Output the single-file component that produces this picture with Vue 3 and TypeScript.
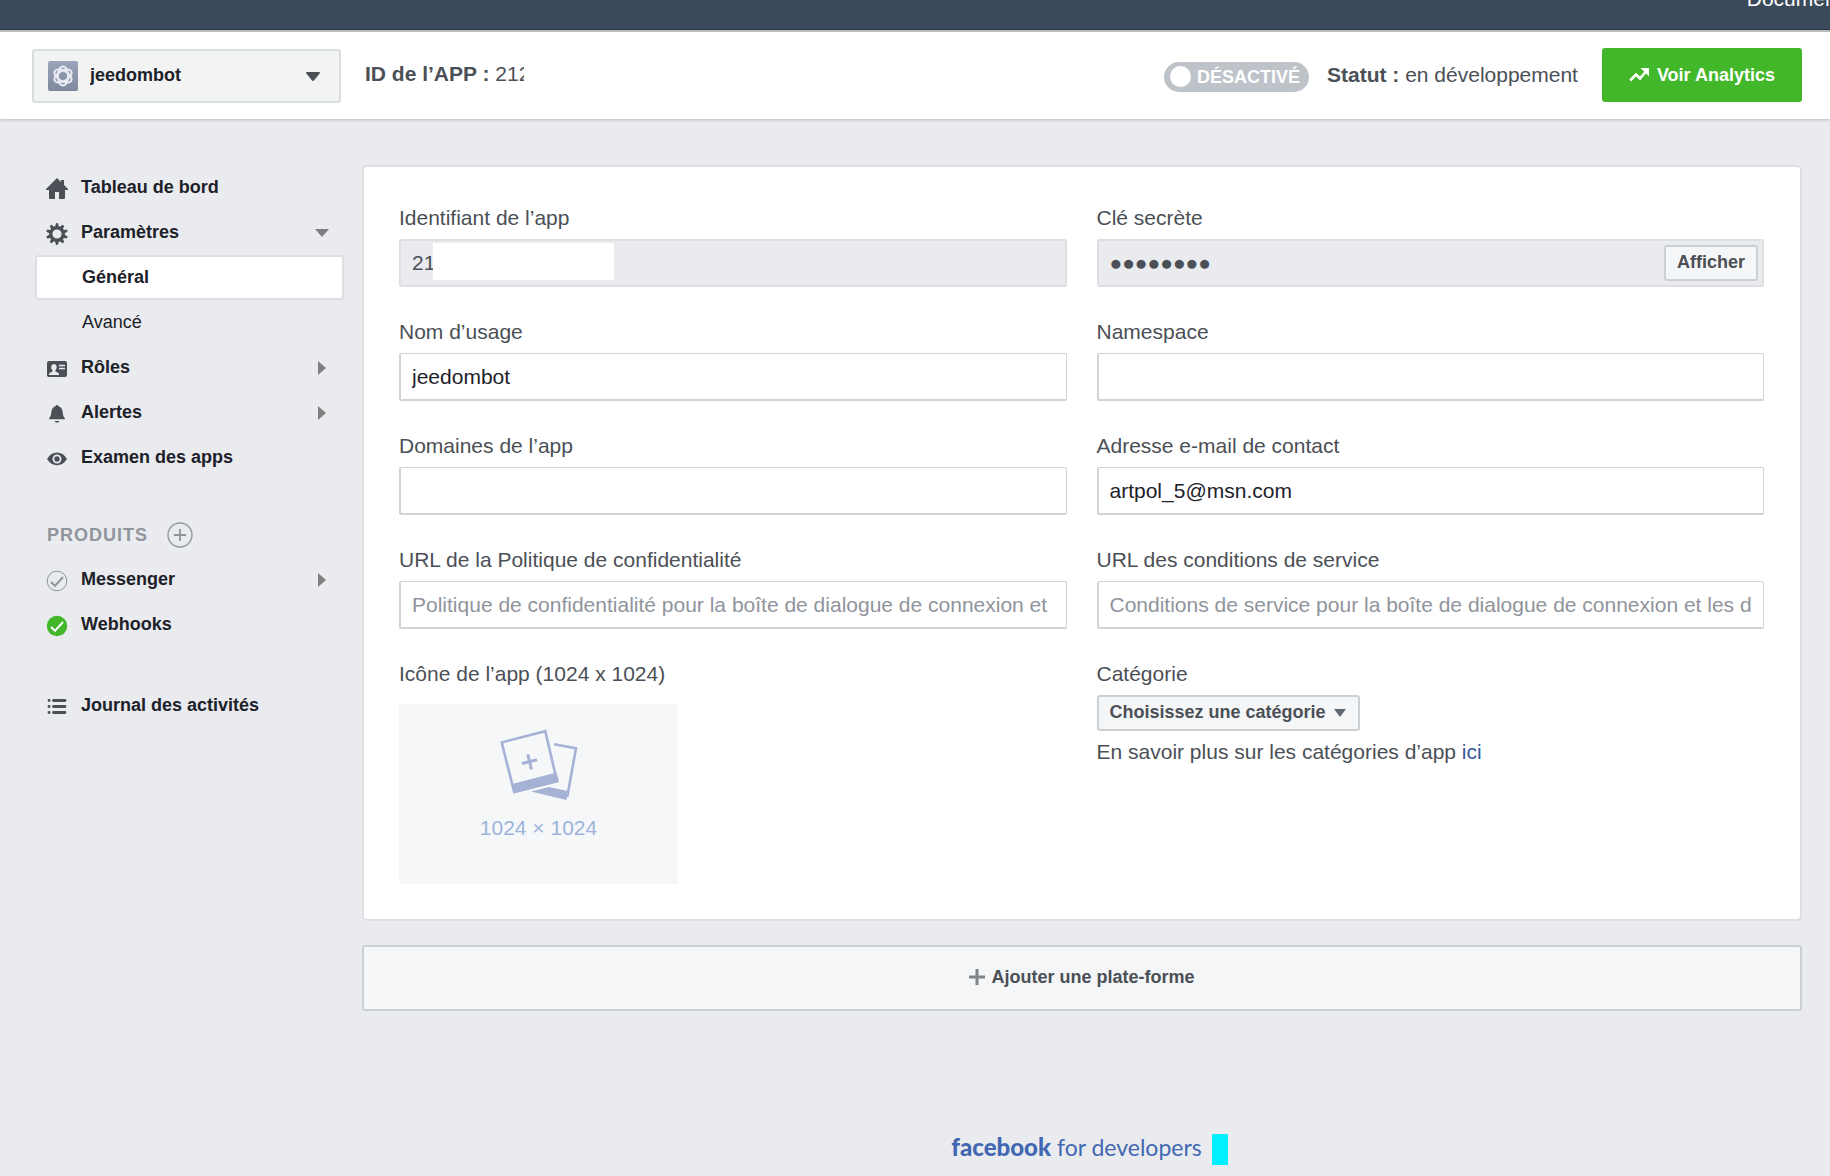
<script setup lang="ts">
import { ref } from 'vue'

type NavItem = {
  label: string
  icon: 'home' | 'gear' | 'card' | 'bell' | 'eye' | 'check' | 'checked' | 'list' | ''
  arrow?: 'down' | 'right'
  kind?: 'active' | 'sub'
}

type Field = {
  id: string
  label: string
  value: string
  placeholder?: string
  locked?: boolean
  masked?: boolean
  action?: string
}

const mainNav: NavItem[] = [
  { label: 'Tableau de bord', icon: 'home' },
  { label: 'Paramètres', icon: 'gear', arrow: 'down' },
  { label: 'Général', icon: '', kind: 'active' },
  { label: 'Avancé', icon: '', kind: 'sub' },
  { label: 'Rôles', icon: 'card', arrow: 'right' },
  { label: 'Alertes', icon: 'bell', arrow: 'right' },
  { label: 'Examen des apps', icon: 'eye' },
]
const productNav: NavItem[] = [
  { label: 'Messenger', icon: 'check', arrow: 'right' },
  { label: 'Webhooks', icon: 'checked' },
]
const logNav: NavItem[] = [{ label: 'Journal des activités', icon: 'list' }]
const navGroups = [
  { key: 'main', title: '', items: mainNav },
  { key: 'products', title: 'PRODUITS', items: productNav },
  { key: 'log', title: '', items: logNav },
]

const fields = ref<Field[]>([
  { id: 'app-id', label: 'Identifiant de l’app', value: '21', locked: true, masked: true },
  { id: 'secret', label: 'Clé secrète', value: '●●●●●●●●', locked: true, action: 'Afficher' },
  { id: 'name', label: 'Nom d’usage', value: 'jeedombot' },
  { id: 'namespace', label: 'Namespace', value: '' },
  { id: 'domains', label: 'Domaines de l’app', value: '' },
  { id: 'email', label: 'Adresse e-mail de contact', value: 'artpol_5@msn.com' },
  {
    id: 'privacy',
    label: 'URL de la Politique de confidentialité',
    value: '',
    placeholder: 'Politique de confidentialité pour la boîte de dialogue de connexion et',
  },
  {
    id: 'terms',
    label: 'URL des conditions de service',
    value: '',
    placeholder: 'Conditions de service pour la boîte de dialogue de connexion et les d',
  },
])

const live = ref(false)
const teeth = [0, 36, 72, 108, 144, 180, 216, 252, 288, 324]
const orbits = [0, 60, 120]
</script>

<template>
  <div class="page">
    <nav class="topbar" aria-label="Site"><a href="#">Documentation</a></nav>

    <header class="header">
      <div class="app-picker">
        <svg class="app-icon" viewBox="0 0 30 30" aria-hidden="true">
          <defs>
            <linearGradient id="tile" x1="0" y1="0" x2="0" y2="1">
              <stop offset="0" stop-color="#9ba6bd" />
              <stop offset="1" stop-color="#7f889c" />
            </linearGradient>
          </defs>
          <rect width="30" height="30" rx="2" fill="url(#tile)" />
          <g fill="none" stroke="#e8ebf2" stroke-width="2">
            <ellipse v-for="o in orbits" :key="o" cx="15" cy="15" rx="5" ry="9.5" :transform="`rotate(${o} 15 15)`" />
          </g>
          <circle cx="15" cy="15" r="3.6" fill="#8c96ab" />
        </svg>
        <select aria-label="Application">
          <option>jeedombot</option>
        </select>
        <svg class="picker-arrow" viewBox="0 0 14 10" aria-hidden="true"><path d="M1 0h12q1.500 0 .6 1.500L8.200 8.200q-1.200 1.400-2.400 0L.4 1.500Q-.5 0 1 0z" fill="#4b4f56" /></svg>
      </div>
      <p class="app-number"><b>ID de l’APP :</b> <span class="cut">212</span></p>
      <label class="toggle">
        <input v-model="live" type="checkbox" role="switch" />
        <span>DÉSACTIVÉ</span>
      </label>
      <p class="status"><b>Statut :</b> en développement</p>
      <a class="analytics" href="#">
        <svg viewBox="0 0 20 14" width="20" height="14" aria-hidden="true">
          <path d="M1.200 12.500 7 6.500l4 4L17 3.500" fill="none" stroke="#fff" stroke-width="2.600" />
          <path d="M11.500 0H20v8.500z" fill="#fff" />
        </svg>
        Voir Analytics
      </a>
    </header>

    <div class="body">
      <nav class="sidebar" aria-label="Application">
        <section v-for="group in navGroups" :key="group.key" class="group">
          <div v-if="group.title" class="group-title">
            <h2>{{ group.title }}</h2>
            <button type="button" aria-label="Ajouter un produit">
              <svg viewBox="0 0 26 26" width="26" height="26" aria-hidden="true">
                <circle cx="13" cy="13" r="12" fill="none" stroke="#90949c" stroke-width="1.300" />
                <path d="M13 7v12M7 13h12" stroke="#90949c" stroke-width="1.800" />
              </svg>
            </button>
          </div>
          <a v-for="item in group.items" :key="item.label" href="#" class="item" :class="item.kind">
            <svg class="icon" viewBox="0 0 22 22" aria-hidden="true">
              <g v-if="item.icon === 'home'" fill="#4b4f56">
                <path d="M11 0 0 11v1h3v8q0 1 1 1h5v-7h4v7h5q1 0 1-1v-8h3v-1l-4-4V2h-3v2z" />
              </g>
              <g v-else-if="item.icon === 'gear'">
                <path v-for="t in teeth" :key="t" d="M9 5 9.800 .4Q11 -.4 12.200 .4L13 5z" fill="#4b4f56" :transform="`rotate(${t} 11 11)`" />
                <circle cx="11" cy="11" r="6.300" fill="none" stroke="#4b4f56" stroke-width="3.400" />
              </g>
              <g v-else-if="item.icon === 'card'">
                <rect x="1" y="3" width="20" height="16" rx="2" fill="#4b4f56" />
                <path d="M3 17v-1q.5-1.500 3-2.200 1-.6.4-1.600Q5 10.500 5.200 8.500 5.500 6 8 6t2.700 2.500q0 2-1.200 3.700-.6 1 .5 1.600 2.500.7 3 2.200v1z" fill="#e9ebee" />
                <path d="M13 7.500h6M13 10.500h6" stroke="#e9ebee" stroke-width="1.300" />
              </g>
              <g v-else-if="item.icon === 'bell'" fill="#4b4f56">
                <path d="M11 2q1.200 0 1.500 1.300Q16.300 4.500 16.600 9q.2 4 2.200 6 .6 1.300-.8 1.300H4q-1.400 0-.8-1.300 2-2 2.200-6 .3-4.500 4.100-5.700Q9.800 2 11 2zM8.500 18h5q-.8 1.800-2.500 1.800T8.500 18z" />
              </g>
              <g v-else-if="item.icon === 'eye'">
                <path d="M1 11Q5 4.600 11 4.600T21 11Q17 17.200 11 17.200T1 11z" fill="#4b4f56" />
                <circle cx="11" cy="11" r="3.600" fill="none" stroke="#e9ebee" stroke-width="1.800" />
              </g>
              <g v-else-if="item.icon === 'check'" fill="none" stroke="#90949c">
                <circle cx="11" cy="11" r="9.800" />
                <path d="m5 12 4 3.800L17 7" stroke-width="2" />
              </g>
              <g v-else-if="item.icon === 'checked'">
                <circle cx="11" cy="11" r="10.200" fill="#42b72a" />
                <path d="m5 12 4 3.800L17 7" fill="none" stroke="#fff" stroke-width="2" />
              </g>
              <g v-else-if="item.icon === 'list'" stroke="#4b4f56" stroke-width="2.800" stroke-linecap="round">
                <path d="M3 4.500h.1M3 10.500h.1M3 16.500h.1M7.500 4.500h11.500M7.500 10.500h11.500M7.500 16.500h11.500" />
              </g>
            </svg>
            <span>{{ item.label }}</span>
            <svg v-if="item.arrow === 'down'" class="caret" viewBox="0 0 14 14" aria-hidden="true"><path d="M0 3h14l-7 8z" fill="#7f7f7f" /></svg>
            <svg v-if="item.arrow === 'right'" class="caret" viewBox="0 0 14 14" aria-hidden="true"><path d="M3 0v14l8-7z" fill="#7f7f7f" /></svg>
          </a>
        </section>
      </nav>

      <main class="main">
        <form class="card" @submit.prevent>
          <div v-for="field in fields" :key="field.id" class="field">
            <label :for="field.id">{{ field.label }}</label>
            <div class="control">
              <input
                :id="field.id"
                v-model="field.value"
                type="text"
                :placeholder="field.placeholder"
                :readonly="field.locked"
                :class="{ locked: field.locked }"
              />
              <span v-if="field.masked" class="mask"></span>
              <button v-if="field.action" type="button" class="small-button reveal">{{ field.action }}</button>
            </div>
          </div>

          <div class="field">
            <span class="label">Icône de l’app (1024 x 1024)</span>
            <button type="button" class="upload">
              <svg viewBox="0 0 78 72" width="78" height="72" aria-hidden="true">
                <g fill="none" stroke="#a5b2d5" stroke-width="2.600">
                  <path d="M54 15.200 76 19.300 67.200 68" />
                  <path d="M1.700 13.400 45.300 2.200 57 52.200 14.200 63z" />
                </g>
                <path d="M12 55 56.500 43.500 59 52.500 13.500 64.500zM31 62.500 49 58 67.500 62 66.500 71z" fill="#a5b2d5" />
                <path d="m22 34.500 15-3.800M27.800 25.300l3.600 15" stroke="#a5b2d5" stroke-width="3" />
              </svg>
              <span>1024 × 1024</span>
            </button>
          </div>

          <div class="field">
            <label for="category">Catégorie</label>
            <div class="category">
              <select id="category" class="small-button">
                <option>Choisissez une catégorie</option>
              </select>
              <svg viewBox="0 0 12 8" width="12" height="8" aria-hidden="true"><path d="M0 0h12L6 8z" fill="#606770" /></svg>
            </div>
            <p class="hint">En savoir plus sur les catégories d’app <a href="#">ici</a></p>
          </div>
        </form>

        <button type="button" class="add-platform">
          <svg viewBox="0 0 16 16" width="16" height="16" aria-hidden="true"><path d="M8 0v16M0 8h16" stroke="#808388" stroke-width="3" /></svg>
          Ajouter une plate-forme
        </button>

        <footer class="footer">
          <a href="#"><b>facebook</b> for developers</a>
          <span class="block"></span>
        </footer>
      </main>
    </div>
  </div>
</template>

<style>
html {
  background: #e9ebee;
}
</style>

<style scoped>
.page,
.page * {
  box-sizing: border-box;
}
.page {
  font-family: 'Liberation Sans', Arial, sans-serif;
  font-size: 21px;
  line-height: 28px;
  color: #4b4f56;
  overflow: hidden;
}
button,
input,
select {
  font-family: inherit;
  margin: 0;
}
a {
  text-decoration: none;
}
p,
h2 {
  margin: 0;
}
.topbar {
  height: 32px;
  display: flex;
  justify-content: flex-end;
  align-items: flex-end;
  overflow: hidden;
  background: #3b4a5a;
  border-bottom: 2px solid #bfc0c1;
  box-shadow: inset 0 -1px #28323d;
}
.topbar a {
  color: #fff;
  margin: 0 -58px 17px 0;
}
.header {
  display: flex;
  align-items: center;
  height: 87px;
  padding: 0 28px 1px 32px;
  background: #fff;
  box-shadow: 0 1px 3px rgba(0, 0, 0, 0.2);
  position: relative;
}
.app-picker {
  position: relative;
  width: 309px;
  margin: 2px 24px 0 0;
}
.app-picker select {
  display: block;
  width: 100%;
  height: 54px;
  padding: 0 40px 2px 56px;
  appearance: none;
  border: 2px solid #dadddd;
  border-radius: 3px;
  background: #f2f4f4;
  color: #1d2129;
  font-size: 18px;
  font-weight: bold;
}
.app-icon {
  position: absolute;
  left: 16px;
  top: 12px;
  width: 30px;
  height: 30px;
}
.picker-arrow {
  position: absolute;
  right: 21px;
  top: 23px;
  width: 14px;
  height: 10px;
  pointer-events: none;
}
.app-number {
  white-space: nowrap;
  margin-right: auto;
  padding-bottom: 2px;
}
.cut {
  display: inline-block;
  width: 29px;
  overflow: hidden;
  vertical-align: bottom;
}
.toggle {
  display: flex;
  align-items: center;
  height: 30px;
  padding: 0 9px 0 6px;
  gap: 6px;
  border-radius: 15px;
  background: #bec3c9;
  color: #fff;
  font-size: 18px;
  font-weight: bold;
  margin: 3px 18px 0 0;
}
.toggle input {
  appearance: none;
  width: 21px;
  height: 21px;
  border-radius: 50%;
  background: #fff;
}
.status {
  margin-right: 24px;
  white-space: nowrap;
}
.analytics {
  display: flex;
  align-items: center;
  gap: 8px;
  height: 54px;
  padding: 0 27px;
  border-radius: 3px;
  background: #42b72a;
  color: #fff;
  font-size: 18px;
  font-weight: bold;
  white-space: nowrap;
}
.body {
  display: flex;
  gap: 18px;
  padding: 46px 28px 0 35px;
}
.sidebar {
  flex: 0 0 309px;
}
.group + .group {
  margin-top: 32px;
}
.group:last-child {
  margin-top: 36px;
}
.item {
  display: flex;
  align-items: center;
  height: 45px;
  padding: 0 13px 0 9px;
  border: 2px solid transparent;
  color: #1d2129;
  font-size: 18px;
  font-weight: bold;
}
.item.active {
  padding-left: 10px;
  background: #fff;
  border-color: #dddfe2;
  border-radius: 3px;
}
.item.sub {
  padding-left: 10px;
  font-weight: normal;
}
.item span {
  flex: 1;
  padding-bottom: 2px;
}
.icon {
  width: 22px;
  height: 22px;
  margin: 2px 13px 0 0;
}
.caret {
  width: 14px;
  height: 14px;
}
.group-title {
  display: flex;
  align-items: center;
  gap: 19px;
  height: 45px;
  padding-left: 12px;
}
.group-title h2 {
  font-size: 18px;
  letter-spacing: 1px;
  color: #90949c;
}
.group-title button {
  display: flex;
  padding: 0;
  border: 0;
  background: none;
}
.main {
  flex: 1;
  min-width: 0;
}
.card {
  display: grid;
  grid-template-columns: 1fr 1fr;
  gap: 31px 30px;
  padding: 37px 36px 35px 35px;
  border: 2px solid #dddfe2;
  border-radius: 5px;
  background: #fff;
}
.field {
  min-width: 0;
}
.field > label,
.label {
  display: block;
  margin-bottom: 7px;
}
.control {
  position: relative;
}
.control input {
  display: block;
  width: 100%;
  height: 48px;
  padding: 0 11px;
  border: 1px solid #d0d3d8;
  border-bottom-width: 2px;
  border-left-width: 2px;
  border-radius: 2px;
  outline: 0;
  background: #fff;
  color: #1d2129;
  font-size: 21px;
}
.control input.locked {
  border: 2px solid #dddfe2;
  background: #e9ebee;
  color: #4b4f56;
}
.control input::placeholder {
  color: #90949c;
  opacity: 1;
}
.mask {
  position: absolute;
  left: 34px;
  top: 4px;
  width: 181px;
  height: 37px;
  background: #fff;
}
.small-button {
  height: 36px;
  padding: 0 11px 2px;
  appearance: none;
  border: 2px solid #ccd0d5;
  border-radius: 3px;
  background: #f5f6f7;
  color: #4b4f56;
  font-size: 18px;
  font-weight: bold;
}
.reveal {
  position: absolute;
  right: 6px;
  top: 6px;
}
.upload {
  display: flex;
  flex-direction: column;
  align-items: center;
  gap: 13px;
  width: 279px;
  height: 180px;
  margin-top: 16px;
  padding: 25px 0 0;
  border: 0;
  background: #f5f7f9;
  color: #9cb4dc;
  font-size: 21px;
  line-height: 28px;
}
.category {
  position: relative;
  width: max-content;
}
.category select {
  display: block;
  padding-right: 31px;
}
.category svg {
  position: absolute;
  right: 14px;
  top: 14px;
  pointer-events: none;
}
.hint {
  margin-top: 7px;
}
.hint a {
  color: #365899;
}
.add-platform {
  display: flex;
  align-items: center;
  justify-content: center;
  gap: 6px;
  width: 100%;
  height: 66px;
  margin-top: 24px;
  padding: 0 0 2px;
  border: 2px solid #ccd0d5;
  border-radius: 3px;
  background: #f5f6f7;
  color: #4b4f56;
  font-size: 18px;
  font-weight: bold;
}
.footer {
  display: flex;
  align-items: center;
  justify-content: center;
  gap: 10px;
  margin-top: 122px;
  padding-left: 15px;
}
.footer a {
  padding-bottom: 4px;
  color: #4267b2;
  font-family: Lato, sans-serif;
  font-size: 23px;
}
.footer b {
  font-size: 24px;
  font-weight: 900;
}
.block {
  width: 16px;
  height: 31px;
  background: #00f0ff;
}
</style>
